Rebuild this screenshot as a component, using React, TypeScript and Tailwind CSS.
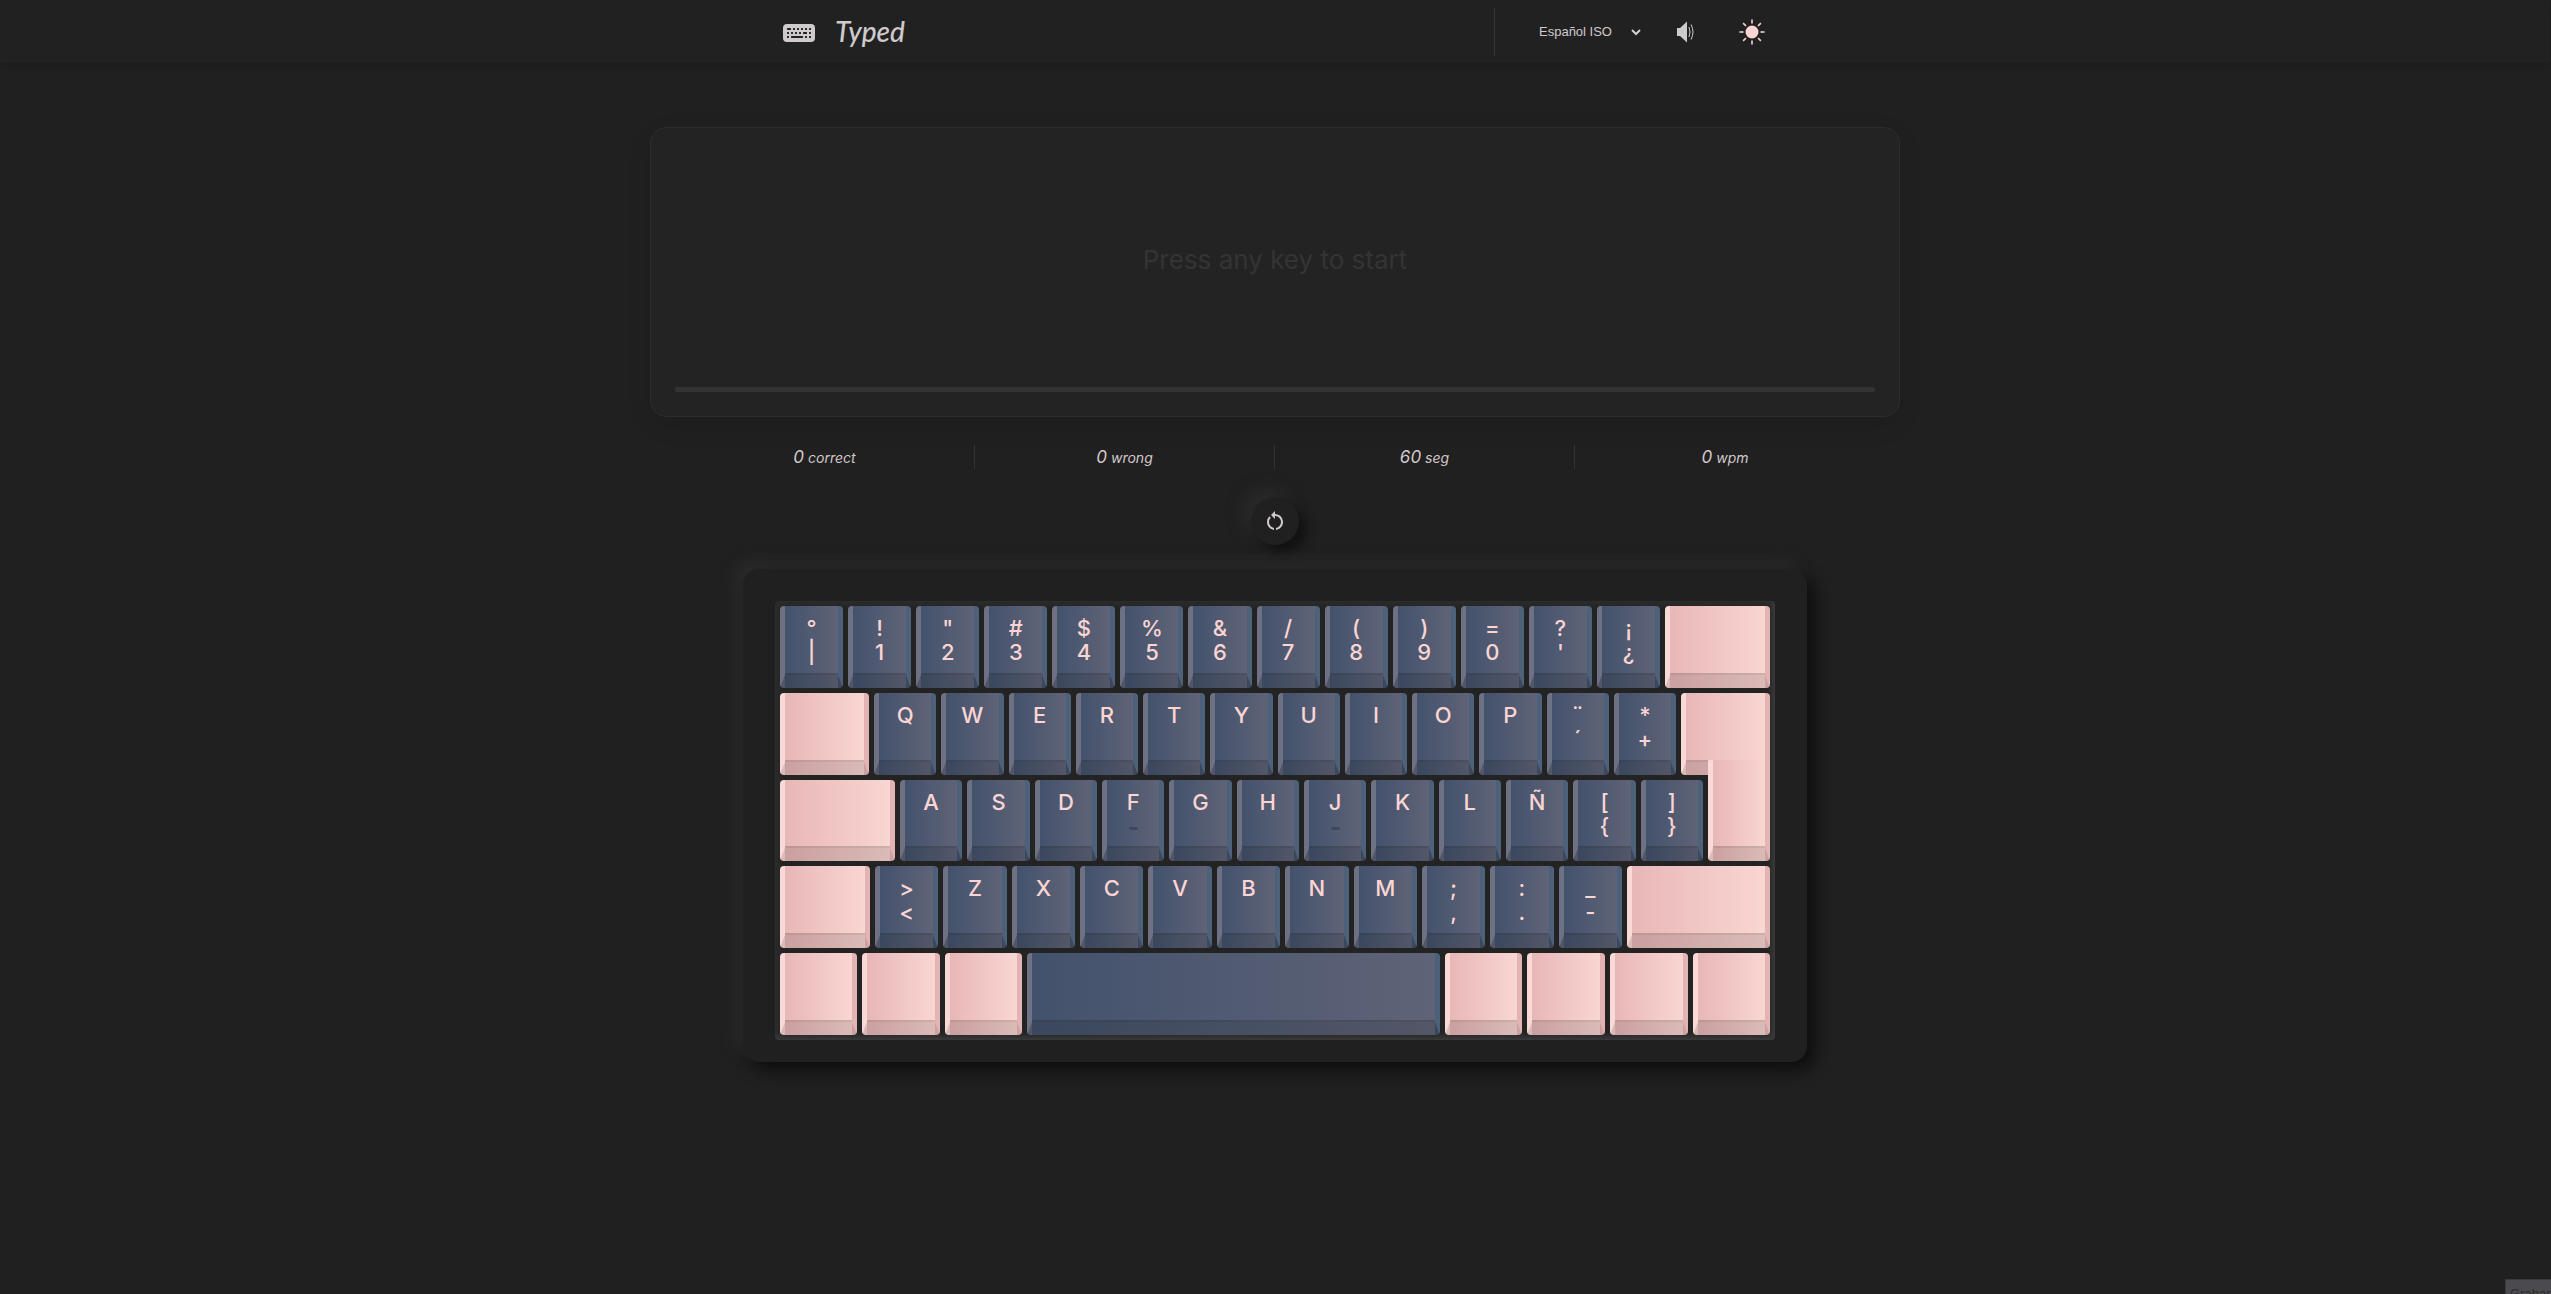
import React from "react";
import { BsKeyboardFill } from "react-icons/bs";
import { MdRestartAlt } from "react-icons/md";

type KeyTone = "blue" | "pink";

interface KeyDef {
  top?: string;
  bottom?: string;
  tone?: KeyTone;
  size?: string;
  label?: string;
  homing?: boolean;
  extra?: string;
}

const chars = (s: string): KeyDef[] => s.split("").map((c) => ({ top: c }));
const pairs = (s: string): KeyDef[] =>
  s.split(" ").map((p) => ({ top: p[0], bottom: p[1] }));
const pink = (label: string, size: string, extra = ""): KeyDef => ({
  tone: "pink",
  label,
  size,
  extra,
});

const rows: KeyDef[][] = [
  [
    ...pairs("°| !1 \"2 #3 $4 %5 &6 /7 (8 )9 =0 ?' ¡¿"),
    pink("Backspace", "w-[105px]"),
  ],
  [
    pink("Tab", "w-[89px]"),
    ...chars("QWERTYUIOP"),
    ...pairs("¨´ *+"),
    pink("Enter", "w-[89px]"),
  ],
  [
    pink("Caps Lock", "w-[115px]"),
    ...chars("ASDFGHJKLÑ").map((k) => ({
      ...k,
      homing: k.top === "F" || k.top === "J",
    })),
    ...pairs("[{ ]}"),
    pink("Enter lower part", "w-[62px]", "-mt-5 rounded-t-none"),
  ],
  [
    pink("Left Shift", "w-[90px]"),
    ...pairs("><"),
    ...chars("ZXCVBNM"),
    ...pairs(";, :. _-"),
    pink("Right Shift", "w-[143px]"),
  ],
  [
    pink("Left Control", "w-[77px]"),
    pink("Meta", "w-[78px]"),
    pink("Alt", "w-[77px]"),
    { label: "Space" },
    pink("Alt Gr", "w-[77px]"),
    pink("Function", "w-[78px]"),
    pink("Menu", "w-[78px]"),
    pink("Right Control", "w-[77px]"),
  ],
];

function Key({ top, bottom, tone = "blue", size = "flex-1", label, homing, extra = "" }: KeyDef) {
  const colours =
    tone === "pink"
      ? "from-[#e8b7b7] to-[#f9d6d2] border-r-black/2 border-l-white/10"
      : "from-[#43526c] to-[#5f6377] border-r-[#64829a]/30 border-l-white/10";
  return (
    <button
      type="button"
      aria-label={label}
      className={`relative flex min-w-0 flex-col items-center rounded border-x-[5px] border-b-[13px] border-b-black/12 bg-linear-to-r pt-2.5 text-[22px] leading-6 font-medium text-[#fbd5d3] shadow-[inset_0_-2px_0_rgba(0,0,0,0.18)] ${colours} ${size} ${extra}`}
    >
      <span>{top}</span>
      <span>{bottom}</span>
      {homing && (
        <span className="absolute top-[47px] h-[3px] w-[9px] rounded-xs bg-black/20" />
      )}
    </button>
  );
}

function SpeakerIcon() {
  return (
    <svg viewBox="0 0 18 24" className="h-6 w-[18px]" aria-hidden="true">
      <path d="M0 8h3l7-6.500v21L3 16H0z" fill="#cfcbcd" />
      <path d="M12 7q2 5 0 10" fill="none" stroke="#cfcbcd" strokeWidth="1" />
      <path d="M14 4.500q4 7.500 0 15" fill="none" stroke="#cfcbcd" strokeWidth="1" />
    </svg>
  );
}

function SunIcon() {
  return (
    <svg viewBox="0 0 26 26" className="size-[26px]" aria-hidden="true">
      <circle cx="13" cy="13" r="6.500" fill="#fbd5d3" />
      <g stroke="#fbd5d3" strokeWidth="1.600">
        {[0, 45, 90, 135, 180, 225, 270, 315].map((a) => (
          <path key={a} d="M13 0.500v4" transform={`rotate(${a} 13 13)`} />
        ))}
      </g>
    </svg>
  );
}

const stats = [
  { value: "0", unit: "correct" },
  { value: "0", unit: "wrong" },
  { value: "60", unit: "seg" },
  { value: "0", unit: "wpm" },
];

export default function App() {
  return (
    <div className="relative flex min-h-screen flex-col bg-[#202020] pr-px font-[Inter,sans-serif] text-[#d3c9cd]">
      <header className="bg-[#212121] shadow-[0_2px_8px_rgba(0,0,0,0.15)]">
        <div className="mx-auto flex h-[63px] w-full max-w-[1000px] items-center justify-between px-2">
          <a href="#" className="flex items-center gap-5 text-[#cfcbcd]">
            <BsKeyboardFill size={32} />
            <span className="pb-0.5 font-[Lato,sans-serif] text-[28px] leading-10 font-medium italic">
              Typed
            </span>
          </a>
          <div className="flex h-12 items-center border-l border-[#363636] pr-0.5">
            <div className="ml-11 flex items-center">
              <select
                aria-label="Keyboard layout"
                className="h-8 w-[88px] appearance-none bg-transparent font-['Liberation_Sans',sans-serif] text-[13px] leading-8 text-[#d3c9cd] outline-none"
              >
                <option>Español ISO</option>
              </select>
              <svg viewBox="0 0 10 8" className="ml-1 h-2 w-2.5" aria-hidden="true">
                <path d="M1 2l4 4 4-4" fill="none" stroke="#d9ccd0" strokeWidth="2" />
              </svg>
            </div>
            <button type="button" aria-label="Sound" className="ml-9">
              <SpeakerIcon />
            </button>
            <button type="button" aria-label="Light mode" className="ml-11">
              <SunIcon />
            </button>
          </div>
        </div>
      </header>

      <main className="flex flex-col items-center pt-16">
        <section className="flex h-[290px] w-full max-w-[1250px] flex-col rounded-2xl border border-[#2c2c2c] bg-[#232323] px-6 pb-6 shadow-[0_8px_24px_rgba(0,0,0,0.1)]">
          <p className="flex flex-1 items-center justify-center pt-1 text-[26px] text-[#343434]">
            Press any key to start
          </p>
          <div className="h-[5px] rounded-xs bg-[#333333]" />
        </section>

        <dl className="mt-7 grid w-full max-w-[1200px] grid-cols-4 divide-x divide-[#333333]">
          {stats.map((s) => (
            <div key={s.unit} className="flex h-6 items-baseline justify-center gap-1 italic">
              <dd className="text-[17px] leading-6">{s.value}</dd>
              <dt className="text-sm leading-6">{s.unit}</dt>
            </div>
          ))}
        </dl>

        <button
          type="button"
          aria-label="Restart"
          className="mt-7 flex size-12 items-center justify-center rounded-full bg-[#202020] shadow-[8px_8px_12px_#121212,-8px_-8px_16px_#2a2a2a]"
        >
          <MdRestartAlt size={24} />
        </button>

        <section
          aria-label="Keyboard"
          className="mt-6 w-full max-w-[1064px] rounded-2xl bg-[#202020] px-8 pt-8 pb-[22px] shadow-[8px_8px_16px_#0e0e0e,-8px_-8px_14px_#2b2b2b]"
        >
          <div className="grid h-[439px] grid-rows-5 gap-[5px] rounded bg-[#232323] p-[5px] shadow-[inset_-4px_-4px_5px_#3a3a3a,inset_4px_4px_5px_#2d2d2d]">
            {rows.map((row, i) => (
              <div key={i} className="flex gap-[5px]">
                {row.map((k, j) => (
                  <Key key={j} {...k} />
                ))}
              </div>
            ))}
          </div>
        </section>
      </main>

      <div className="absolute right-0 bottom-0 h-[15px] w-[46px] overflow-hidden border-t border-l border-[#3a3a3c] bg-[#4b4b4f] px-1 pt-1.5 font-['Liberation_Sans',sans-serif] text-[13px] leading-4 text-[#2c2c2e]">
        Grabar
      </div>
    </div>
  );
}
